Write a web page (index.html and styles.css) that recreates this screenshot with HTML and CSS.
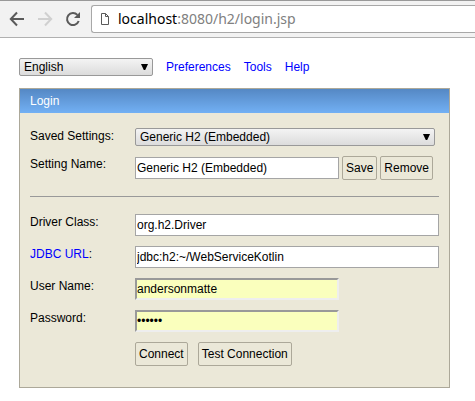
FILE: index.html
```html
<!DOCTYPE html>
<html lang="en">
<head>
<meta charset="utf-8">
<title>H2 Console</title>
<link rel="stylesheet" href="styles.css">
</head>
<body>
<header class="toolbar">
  <button class="nav" type="button" aria-label="Back">
    <svg width="16" height="16" viewBox="0 0 16 16"><path d="M15 8H2.500M8 1.500L1.800 8 8 14.500" fill="none" stroke="#5a5a5a" stroke-width="2"/></svg>
  </button>
  <button class="nav" type="button" aria-label="Forward" disabled>
    <svg width="16" height="16" viewBox="0 0 16 16"><path d="M1 8h12.500M8 1.500L14.200 8 8 14.500" fill="none" stroke="#d0d0d0" stroke-width="2"/></svg>
  </button>
  <button class="nav" type="button" aria-label="Reload">
    <svg width="16" height="16" viewBox="0 0 16 16"><path d="M13.700 10A6 6 0 1 1 12.400 3.900" fill="none" stroke="#5a5a5a" stroke-width="2"/><path d="M15 1v6H9z" fill="#5a5a5a"/></svg>
  </button>
  <div class="address">
    <svg width="10" height="14" viewBox="0 0 10 14"><path d="M1.500 1.500H5.500L8.500 4.500V12.500H1.500zM5.500 1.500V4.500H8.500" fill="none" stroke="#5a5a5a"/></svg>
    <span class="url"><span class="host">localhost</span>:8080/h2/login.jsp</span>
  </div>
</header>
<main class="page">
  <nav class="links">
    <span class="select language"><select aria-label="Language"><option>English</option></select></span>
    <a href="#">Preferences</a>
    <a href="#">Tools</a>
    <a href="#">Help</a>
  </nav>
  <form class="panel">
    <h1 class="title">Login</h1>
    <div class="fields">
      <div class="row">
        <label for="saved">Saved Settings:</label>
        <span class="select saved"><select id="saved"><option>Generic H2 (Embedded)</option></select></span>
      </div>
      <div class="row">
        <label for="name">Setting Name:</label>
        <div class="group">
          <input class="short" id="name" type="text" value="Generic H2 (Embedded)">
          <button class="button" type="button">Save</button>
          <button class="button" type="button">Remove</button>
        </div>
      </div>
      <hr>
      <div class="row">
        <label for="driver">Driver Class:</label>
        <input id="driver" type="text" value="org.h2.Driver">
      </div>
      <div class="row">
        <label for="url"><a href="#">JDBC URL</a>:</label>
        <input id="url" type="text" value="jdbc:h2:~/WebServiceKotlin">
      </div>
      <div class="row">
        <label for="user">User Name:</label>
        <input class="short filled" id="user" type="text" value="andersonmatte">
      </div>
      <div class="row">
        <label for="password">Password:</label>
        <input class="short filled" id="password" type="password" value="secret">
      </div>
      <div class="row">
        <div class="group actions">
          <button class="button" type="button">Connect</button>
          <button class="button" type="button">Test Connection</button>
        </div>
      </div>
    </div>
  </form>
</main>
</body>
</html>
```
FILE: styles.css
```css
* {
  box-sizing: border-box;
}

body {
  margin: 0;
  background: #fff;
  color: #000;
  font: 12px/16px "Liberation Sans", Arial, sans-serif;
}

a {
  color: #00f;
  text-decoration: none;
}

input,
select,
button {
  margin: 0;
  font: inherit;
  color: #000;
}

.toolbar {
  display: flex;
  align-items: center;
  gap: 12px;
  height: 38px;
  padding-left: 9px;
  border-top: 1px solid #999;
  border-bottom: 1px solid #b0b0b0;
  background: #f2f2f2;
}

.nav {
  flex: none;
  display: flex;
  padding: 0;
  border: 0;
  background: none;
}

.address {
  flex: 1;
  display: flex;
  align-items: center;
  gap: 8px;
  height: 28px;
  margin-left: -2px;
  padding-left: 8px;
  border: 1px solid #a8a8a8;
  border-right: 0;
  border-radius: 3px 0 0 3px;
  background: #fff;
}

.url {
  color: #808080;
  font: 14px/24px "Noto Sans", sans-serif;
}

.host {
  color: #000;
}

.page {
  padding: 20px 25px 13px 19px;
}

.links {
  display: flex;
  align-items: center;
  gap: 13px;
  margin-bottom: 12px;
}

.select {
  position: relative;
  display: block;
}

.select::after {
  content: "";
  position: absolute;
  top: 6px;
  right: 5px;
  width: 7px;
  height: 6px;
  background: #000;
  clip-path: polygon(0 0, 100% 0, 60% 100%, 40% 100%);
  pointer-events: none;
}

.select select {
  display: block;
  width: 100%;
  height: 18px;
  padding: 0 4px;
  border: 1px solid #999;
  border-radius: 2px;
  background: linear-gradient(#f4f4f4, #dcdcdc);
  line-height: 16px;
  appearance: none;
}

.language {
  width: 134px;
}

.panel {
  border: 1px solid #aca899;
  background: #ebe8d8;
}

.title {
  margin: 0;
  padding: 4px 10px;
  background: linear-gradient(#5588c4, #72b0f4);
  color: #fff;
  font: inherit;
}

.fields {
  display: grid;
  gap: 10px;
  padding: 15px 10px 21px;
}

.row {
  display: grid;
  grid-template-columns: 105px 1fr;
  align-items: start;
}

.row > label {
  line-height: 16px;
}

.saved {
  margin-right: 4px;
}

hr {
  width: 100%;
  height: 1px;
  margin: 6px 0 7px;
  border: 0;
  background: #999;
}

input {
  width: 100%;
  height: 22px;
  padding: 1px;
  border: 1px solid #a5a5a5;
  background: #fff;
}

.short {
  width: 204px;
}

.filled {
  padding: 0;
  border: 2px solid;
  border-color: #999 #eee #eee #999;
  background: #faffbd;
}

.group {
  display: flex;
  align-items: center;
  gap: 3px;
}

.actions {
  grid-column: 2;
  gap: 10px;
}

.button {
  height: 24px;
  padding: 0 3px;
  border: 1px solid #aca899;
  border-radius: 2px;
  background: #ebe8d8;
  white-space: nowrap;
}
```
